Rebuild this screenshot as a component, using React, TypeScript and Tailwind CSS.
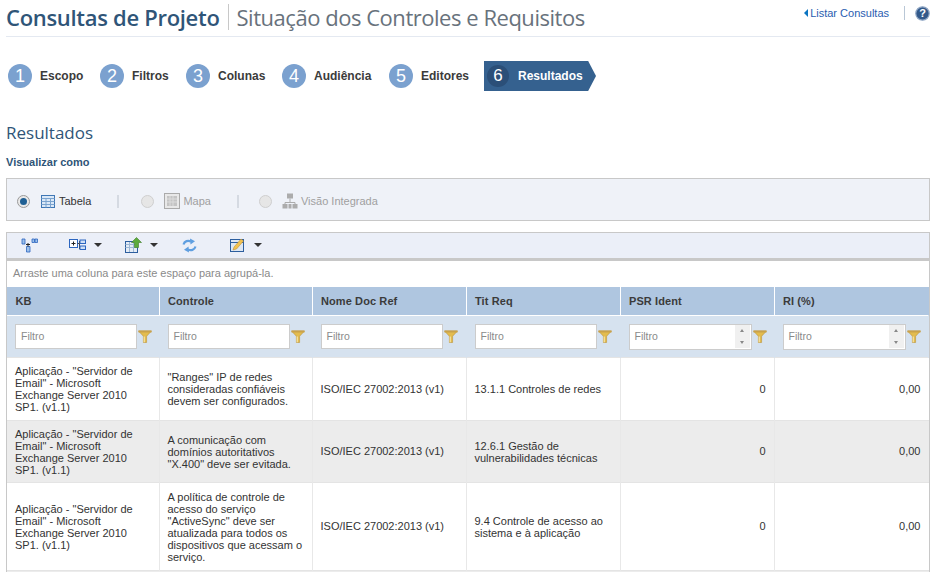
import React from 'react'

const steps = [
  { n: 1, label: 'Escopo', gap: 'w-[92px]' },
  { n: 2, label: 'Filtros', gap: 'w-[86px]' },
  { n: 3, label: 'Colunas', gap: 'w-[96px]' },
  { n: 4, label: 'Audiência', gap: 'w-[107px]' },
  { n: 5, label: 'Editores', gap: 'w-[96px]' },
]

const columns = ['KB', 'Controle', 'Nome Doc Ref', 'Tit Req', 'PSR Ident', 'RI (%)']
const kb = ['Aplicação - "Servidor de', 'Email" - Microsoft', 'Exchange Server 2010', 'SP1. (v1.1)']

const rows = [
  {
    control: ['"Ranges" IP de redes', 'consideradas confiáveis', 'devem ser configurados.'],
    req: ['13.1.1 Controles de redes'],
    height: 'h-[63px]',
    bg: 'bg-white',
  },
  {
    control: ['A comunicação com', 'domínios autoritativos', '"X.400" deve ser evitada.'],
    req: ['12.6.1 Gestão de', 'vulnerabilidades técnicas'],
    height: 'h-[62px]',
    bg: 'bg-[#ececec]',
  },
  {
    control: [
      'A política de controle de',
      'acesso do serviço',
      '"ActiveSync" deve ser',
      'atualizada para todos os',
      'dispositivos que acessam o',
      'serviço.',
    ],
    req: ['9.4 Controle de acesso ao', 'sistema e à aplicação'],
    height: 'h-[88px]',
    bg: 'bg-white',
  },
]

const Lines = ({ lines }: { lines: string[] }) => (
  <div className="leading-[12px]">
    {lines.map((l) => (
      <div key={l}>{l}</div>
    ))}
  </div>
)

const Funnel = () => (
  <svg width="14" height="13" viewBox="0 0 14 13" className="shrink-0">
    <path d="M0.5 1h13L8.600 6.200V12.500H5.400V6.200z" fill="#e3bc4e" stroke="#b8923a" strokeWidth="0.6" />
    <rect x="0.500" y="0.500" width="13" height="2" fill="#c9a24a" />
    <path d="M5.600 6.500h1.300v5.800H5.600z" fill="#f5e3a2" />
  </svg>
)

const Caret = ({ className }: { className: string }) => (
  <span className={`h-0 w-0 border-x-[4px] border-t-[4px] border-x-transparent border-t-[#333] ${className}`} />
)

const FilterCell = ({ numeric }: { numeric?: boolean }) => (
  <td className="border-r border-[#d6e2ef] pl-[8px]">
    <div className="flex items-center gap-px">
      {numeric ? (
        <div className="flex h-[26px] w-[123px] items-center justify-between border border-[#cccccc] bg-white pl-[5px] pr-px text-[#8a8a8a]">
          <span>Filtro</span>
          <span className="flex h-[23px] w-[15px] flex-col items-center justify-around bg-[#f0f0f0]">
            <span className="h-0 w-0 border-x-[2px] border-b-[3px] border-x-transparent border-b-[#888]" />
            <span className="h-0 w-0 border-x-[2px] border-t-[3px] border-x-transparent border-t-[#888]" />
          </span>
        </div>
      ) : (
        <div className="flex h-[25px] w-[122px] items-center border border-[#cccccc] bg-white pl-[5px] text-[#8a8a8a]">
          Filtro
        </div>
      )}
      <Funnel />
    </div>
  </td>
)

export default function App() {
  return (
    <div className="h-[572px] w-[933px] overflow-hidden bg-white pl-[6px] pr-[3px] font-['Liberation_Sans',sans-serif] text-[11px] text-[#333]">
      <div className="flex h-[37px] items-center justify-between border-b border-[#e4e9f1] pb-[2px]">
        <div className="flex items-center font-['Open_Sans',sans-serif] text-[22px]">
          <span className="font-semibold tracking-[-0.3px] text-[#2f5578]">Consultas de Projeto</span>
          <span className="mx-[8px] h-[26px] w-px bg-[#c8c8c8]" />
          <span className="tracking-[-0.47px] text-[#68727c]">Situação dos Controles e Requisitos</span>
        </div>
        <div className="flex items-center pb-[8px]">
          <span className="mr-[2px] h-0 w-0 border-y-[4px] border-r-[4px] border-y-transparent border-r-[#0a75c2]" />
          <span className="text-[11px] text-[#2a5db0]">Listar Consultas</span>
          <span className="ml-[15px] mr-[10px] h-[14px] w-px bg-[#b9c7d6]" />
          <svg width="15" height="15" viewBox="0 0 15 15">
            <circle cx="7.500" cy="7.500" r="6.700" fill="#33598a" stroke="#8fa6c4" strokeWidth="1.200" />
            <text x="7.500" y="11.300" textAnchor="middle" fontSize="11" fontWeight="700" fill="#fff" fontFamily="Liberation Sans">
              ?
            </text>
          </svg>
        </div>
      </div>

      <div className="mt-[24px] flex h-[30px] items-center pl-[2px]">
        {steps.map((s) => (
          <div key={s.n} className={`flex items-center ${s.gap}`}>
            <span className="flex h-[24px] w-[24px] items-center justify-center rounded-full bg-[#7ba1cf] text-[18px] text-white">
              {s.n}
            </span>
            <span className="ml-[8px] text-[12px] font-bold text-[#3b3b3b]">{s.label}</span>
          </div>
        ))}
        <div className="ml-[-1px] flex h-[30px] w-[112px] items-center bg-[#35618f] pl-[3px] [clip-path:polygon(0_0,93%_0,100%_50%,93%_100%,0_100%)]">
          <span className="flex h-[22px] w-[22px] items-center justify-center rounded-full bg-[#2b4f78] text-[17px] text-white">
            6
          </span>
          <span className="ml-[9px] text-[12px] font-bold text-white">Resultados</span>
        </div>
      </div>

      <div className="mt-[30px] font-['Open_Sans',sans-serif] text-[17px] leading-[24px] text-[#2f5578]">Resultados</div>
      <div className="mt-[10px] text-[11px] font-bold leading-[14px] text-[#2f5578]">Visualizar como</div>

      <div className="mt-[9px] flex h-[43px] items-center border border-[#c8c8c8] bg-[#eff2f8] pl-[10px] pt-[3px]">
        <span className="flex h-[13px] w-[13px] items-center justify-center rounded-full border border-[#9a9a9a] bg-[#e8e8e8]">
          <span className="h-[7px] w-[7px] rounded-full bg-[#1e5f94]" />
        </span>
        <svg width="14" height="13" viewBox="0 0 14 13" className="ml-[11px]">
          <rect x="0.500" y="0.500" width="13" height="12" fill="#dbe9f8" stroke="#3f77b5" />
          <path d="M0.500 3.500h13M0.500 6.500h13M0.500 9.500h13M5 3.500v9M9.500 3.500v9" stroke="#7ba4cf" fill="none" />
        </svg>
        <span className="ml-[4px] text-[#333]">Tabela</span>
        <span className="ml-[26px] h-[13px] w-[2px] bg-[#d5dae2]" />
        <span className="ml-[22px] h-[13px] w-[13px] rounded-full border border-[#cfcfcf] bg-[#e6e6e6]" />
        <svg width="16" height="16" viewBox="0 0 16 16" className="ml-[10px]">
          <rect x="0.500" y="0.500" width="15" height="15" fill="#e8e8e8" stroke="#aaa" />
          <rect x="3" y="3" width="10" height="10" fill="#c4c4c4" />
          <path d="M3 6h10M3 9h10M6 3v10M9 3v10" stroke="#dcdcdc" />
        </svg>
        <span className="ml-[3px] text-[#a0a0a0]">Mapa</span>
        <span className="ml-[26px] h-[13px] w-[2px] bg-[#d5dae2]" />
        <span className="ml-[20px] h-[13px] w-[13px] rounded-full border border-[#cfcfcf] bg-[#e6e6e6]" />
        <svg width="16" height="16" viewBox="0 0 16 16" className="ml-[10px]">
          <path d="M5 0.500h6v5H5zM0.500 11h5v4.500h-5zM10.500 11h5v4.500h-5zM6.500 11h3v4.500h-3z" fill="#acacac" />
          <path d="M8 5.500v4M3 11V9.500h10V11" stroke="#acacac" fill="none" />
        </svg>
        <span className="ml-[3px] text-[#a0a0a0]">Visão Integrada</span>
      </div>

      <div className="mt-[11px] flex h-[29px] items-center border border-b-[3px] border-[#c8c8c8] bg-[#ebeff8] pb-[1px]">
        <svg width="17" height="15" viewBox="0 0 17 15" className="ml-[14px]">
          <path d="M1 1h3v5H1zM11 1h2.500v3.500H11zM14 1h2.500v3.500H14zM5.500 8.500h3.500v5.500H5.500z" fill="#9cc0ea" stroke="#2c66c0" strokeWidth="0.8" />
          <path d="M7 5v3.500M5 6.500h4" stroke="#222" strokeWidth="1" />
        </svg>
        <svg width="17" height="12" viewBox="0 0 17 12" className="ml-[31px]">
          <rect x="0.500" y="0.500" width="8" height="8" fill="#fff" stroke="#2c66c0" />
          <path d="M2.500 4.500h4M4.500 2.500v4" stroke="#222" />
          <path d="M8.500 4.500h2M10.500 2v8" stroke="#444" fill="none" />
          <rect x="11" y="1" width="5.500" height="3.500" fill="#cfe0f6" stroke="#2c66c0" />
          <rect x="11" y="7" width="5.500" height="3.500" fill="#cfe0f6" stroke="#2c66c0" />
        </svg>
        <Caret className="ml-[8px]" />
        <svg width="17" height="16" viewBox="0 0 17 16" className="ml-[23px]">
          <rect x="0.500" y="4.500" width="12" height="11" fill="#e4ecf6" stroke="#2c5e9e" />
          <path d="M0.500 7.500h12M0.500 10.500h12M4.500 5v10M8.500 5v10" stroke="#9db8d6" />
          <path d="M11.500 0.500l5 5h-3v5h-4v-5h-3z" fill="#5cab3c" stroke="#3c7c26" strokeWidth="0.6" />
        </svg>
        <Caret className="ml-[8px]" />
        <svg width="15" height="15" viewBox="0 0 15 15" className="ml-[24px]">
          <path d="M1.500 6.500C2.500 3 6 2 9 3.500" fill="none" stroke="#5f9fe0" strokeWidth="2.200" />
          <path d="M8 0.500l5 2.800L8.500 6.500z" fill="#5f9fe0" />
          <path d="M13.500 8.500C12.500 12 9 13 6 11.500" fill="none" stroke="#5f9fe0" strokeWidth="2.200" />
          <path d="M7 14.500l-5-2.800L6.500 8.500z" fill="#5f9fe0" />
        </svg>
        <svg width="15" height="14" viewBox="0 0 15 14" className="ml-[33px]">
          <rect x="0.500" y="1.500" width="13" height="12" fill="#dde7f3" stroke="#2c5e9e" />
          <path d="M0.500 4.500h13" stroke="#2c5e9e" />
          <path d="M3 12l1-3 7-8 2.500 2-7 8z" fill="#f1c24f" stroke="#b8862c" strokeWidth="0.500" />
        </svg>
        <Caret className="ml-[9px]" />
      </div>

      <div className="flex h-[25px] items-center border-x border-[#c8c8c8] pb-[1px] pl-[6px] text-[11px] text-[#8a8a8a]">
        Arraste uma coluna para este espaço para agrupá-la.
      </div>

      <div className="h-[300px] border-x border-[#c8c8c8]">
        <table className="w-full table-fixed border-collapse">
          <colgroup>
            <col className="w-[152px]" />
            <col className="w-[153px]" />
            <col className="w-[154px]" />
            <col className="w-[154px]" />
            <col className="w-[154px]" />
            <col />
          </colgroup>
          <thead>
            <tr className="h-[29px] bg-[#afc6e0]">
              {columns.map((c) => (
                <th key={c} className="border-x border-t border-white pl-[8.500px] text-left font-bold tracking-[0.1px] text-[#3b3b3b] first:border-l-0 last:border-r-0">
                  {c}
                </th>
              ))}
            </tr>
            <tr className="h-[42px] border-t border-white bg-[#d6e2ef] text-[10.500px] font-normal">
              <FilterCell />
              <FilterCell />
              <FilterCell />
              <FilterCell />
              <FilterCell numeric />
              <FilterCell numeric />
            </tr>
          </thead>
          <tbody>
            {rows.map((r) => (
              <tr key={r.control[0]} className={`${r.height} ${r.bg} border-t border-[#e4e4e4] text-[11px] text-[#333]`}>
                <td className="border-r border-[#e8e8e8] pl-[8px]">
                  <Lines lines={kb} />
                </td>
                <td className="border-r border-[#e8e8e8] pl-[8px]">
                  <Lines lines={r.control} />
                </td>
                <td className="border-r border-[#e8e8e8] pl-[8px]">ISO/IEC 27002:2013 (v1)</td>
                <td className="border-r border-[#e8e8e8] pl-[8px]">
                  <Lines lines={r.req} />
                </td>
                <td className="border-r border-[#e8e8e8] pr-[8px] text-right">0</td>
                <td className="pr-[8px] text-right">0,00</td>
              </tr>
            ))}
            <tr className="h-[10px] border-t border-[#e4e4e4] bg-[#ececec]">
              <td colSpan={6} />
            </tr>
          </tbody>
        </table>
      </div>
    </div>
  )
}
